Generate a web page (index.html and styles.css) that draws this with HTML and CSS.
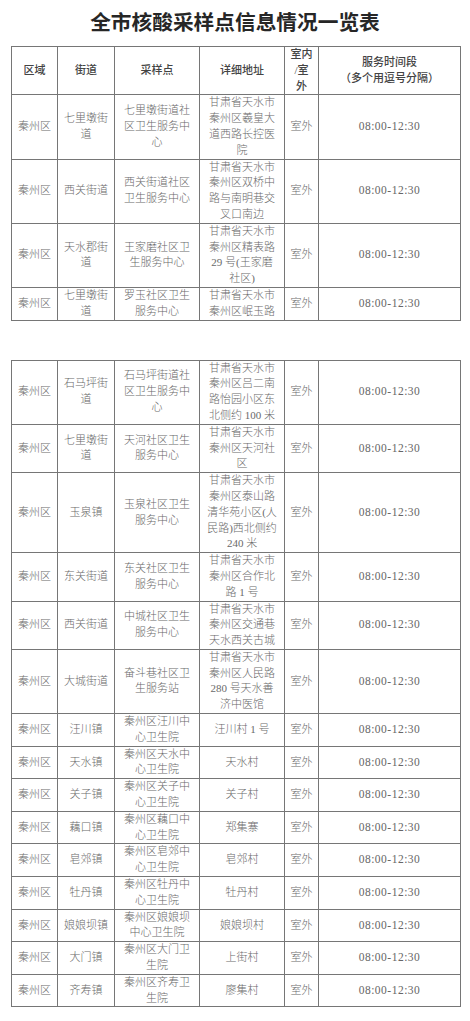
FILE: index.html
```html
<!DOCTYPE html>
<html lang="zh-CN">
<head>
<meta charset="utf-8">
<title>全市核酸采样点信息情况一览表</title>
<link rel="stylesheet" href="styles.css">
</head>
<body>
<div class="page">
  <h1 class="title">全市核酸采样点信息情况一览表</h1>

  <table class="grid">
    <colgroup>
      <col class="c1"><col class="c2"><col class="c3"><col class="c4"><col class="c5"><col class="c6">
    </colgroup>
    <tr class="head">
      <th>区域</th><th>街道</th><th>采样点</th><th>详细地址</th><th>室内<br>/室<br>外</th><th>服务时间段<br>（多个用逗号分隔）</th>
    </tr>
    <tr><td>秦州区</td><td>七里墩街<br>道</td><td>七里墩街道社<br>区卫生服务中<br>心</td><td>甘肃省天水市<br>秦州区羲皇大<br>道西路长控医<br>院</td><td>室外</td><td class="t">08:00-12:30</td></tr>
    <tr><td>秦州区</td><td>西关街道</td><td>西关街道社区<br>卫生服务中心</td><td>甘肃省天水市<br>秦州区双桥中<br>路与南明巷交<br>叉口南边</td><td>室外</td><td class="t">08:00-12:30</td></tr>
    <tr><td>秦州区</td><td>天水郡街<br>道</td><td>王家磨社区卫<br>生服务中心</td><td>甘肃省天水市<br>秦州区精表路<br>29 号(王家磨<br>社区)</td><td>室外</td><td class="t">08:00-12:30</td></tr>
    <tr><td>秦州区</td><td>七里墩街<br>道</td><td>罗玉社区卫生<br>服务中心</td><td>甘肃省天水市<br>秦州区岷玉路</td><td>室外</td><td class="t">08:00-12:30</td></tr>
  </table>

  <table class="grid second">
    <colgroup>
      <col class="c1"><col class="c2"><col class="c3"><col class="c4"><col class="c5"><col class="c6">
    </colgroup>
    <tr><td>秦州区</td><td>石马坪街<br>道</td><td>石马坪街道社<br>区卫生服务中<br>心</td><td>甘肃省天水市<br>秦州区吕二南<br>路怡园小区东<br>北侧约 100 米</td><td>室外</td><td class="t">08:00-12:30</td></tr>
    <tr><td>秦州区</td><td>七里墩街<br>道</td><td>天河社区卫生<br>服务中心</td><td>甘肃省天水市<br>秦州区天河社<br>区</td><td>室外</td><td class="t">08:00-12:30</td></tr>
    <tr><td>秦州区</td><td>玉泉镇</td><td>玉泉社区卫生<br>服务中心</td><td>甘肃省天水市<br>秦州区泰山路<br>清华苑小区(人<br>民路)西北侧约<br>240 米</td><td>室外</td><td class="t">08:00-12:30</td></tr>
    <tr><td>秦州区</td><td>东关街道</td><td>东关社区卫生<br>服务中心</td><td>甘肃省天水市<br>秦州区合作北<br>路 1 号</td><td>室外</td><td class="t">08:00-12:30</td></tr>
    <tr><td>秦州区</td><td>西关街道</td><td>中城社区卫生<br>服务中心</td><td>甘肃省天水市<br>秦州区交通巷<br>天水西关古城</td><td>室外</td><td class="t">08:00-12:30</td></tr>
    <tr><td>秦州区</td><td>大城街道</td><td>奋斗巷社区卫<br>生服务站</td><td>甘肃省天水市<br>秦州区人民路<br>280 号天水善<br>济中医馆</td><td>室外</td><td class="t">08:00-12:30</td></tr>
    <tr><td>秦州区</td><td>汪川镇</td><td>秦州区汪川中<br>心卫生院</td><td>汪川村 1 号</td><td>室外</td><td class="t">08:00-12:30</td></tr>
    <tr><td>秦州区</td><td>天水镇</td><td>秦州区天水中<br>心卫生院</td><td>天水村</td><td>室外</td><td class="t">08:00-12:30</td></tr>
    <tr><td>秦州区</td><td>关子镇</td><td>秦州区关子中<br>心卫生院</td><td>关子村</td><td>室外</td><td class="t">08:00-12:30</td></tr>
    <tr><td>秦州区</td><td>藕口镇</td><td>秦州区藕口中<br>心卫生院</td><td>郑集寨</td><td>室外</td><td class="t">08:00-12:30</td></tr>
    <tr><td>秦州区</td><td>皂郊镇</td><td>秦州区皂郊中<br>心卫生院</td><td>皂郊村</td><td>室外</td><td class="t">08:00-12:30</td></tr>
    <tr><td>秦州区</td><td>牡丹镇</td><td>秦州区牡丹中<br>心卫生院</td><td>牡丹村</td><td>室外</td><td class="t">08:00-12:30</td></tr>
    <tr><td>秦州区</td><td>娘娘坝镇</td><td>秦州区娘娘坝<br>中心卫生院</td><td>娘娘坝村</td><td>室外</td><td class="t">08:00-12:30</td></tr>
    <tr><td>秦州区</td><td>大门镇</td><td>秦州区大门卫<br>生院</td><td>上街村</td><td>室外</td><td class="t">08:00-12:30</td></tr>
    <tr><td>秦州区</td><td>齐寿镇</td><td>秦州区齐寿卫<br>生院</td><td>廖集村</td><td>室外</td><td class="t">08:00-12:30</td></tr>
  </table>
</div>
</body>
</html>
```

FILE: styles.css
```css
html, body {
  margin: 0;
  padding: 0;
  background: #ffffff;
}

.page {
  width: 470px;
  padding: 0 0 16px 0;
  font-family: "Liberation Serif", "Noto Sans CJK SC", serif;
}

.title {
  margin: 0;
  padding-top: 6px;
  height: 40px;
  line-height: 30px;
  text-align: center;
  font-family: "Noto Sans CJK SC", sans-serif;
  font-size: 20.7px;
  font-weight: 700;
  color: #262626;
}

.grid {
  margin-left: 11px;
  width: 449px;
  border-collapse: collapse;
  table-layout: fixed;
  border: 1px solid #707070;
}

.grid.second {
  margin-top: 39px;
}

.c1 { width: 46px; }
.c2 { width: 57px; }
.c3 { width: 85px; }
.c4 { width: 85px; }
.c5 { width: 34px; }
.c6 { width: 142px; }

.grid th,
.grid td {
  border: 1px solid #767676;
  padding: 0;
  text-align: center;
  vertical-align: middle;
  white-space: nowrap;
  font-size: 11px;
  line-height: 15.8px;
  font-weight: 300;
  color: #6a6a6a;
}

.grid th {
  font-weight: 500;
  color: #444444;
}

.grid td.t {
  font-size: 11.5px;
  letter-spacing: 0.5px;
  color: #666666;
}
```
